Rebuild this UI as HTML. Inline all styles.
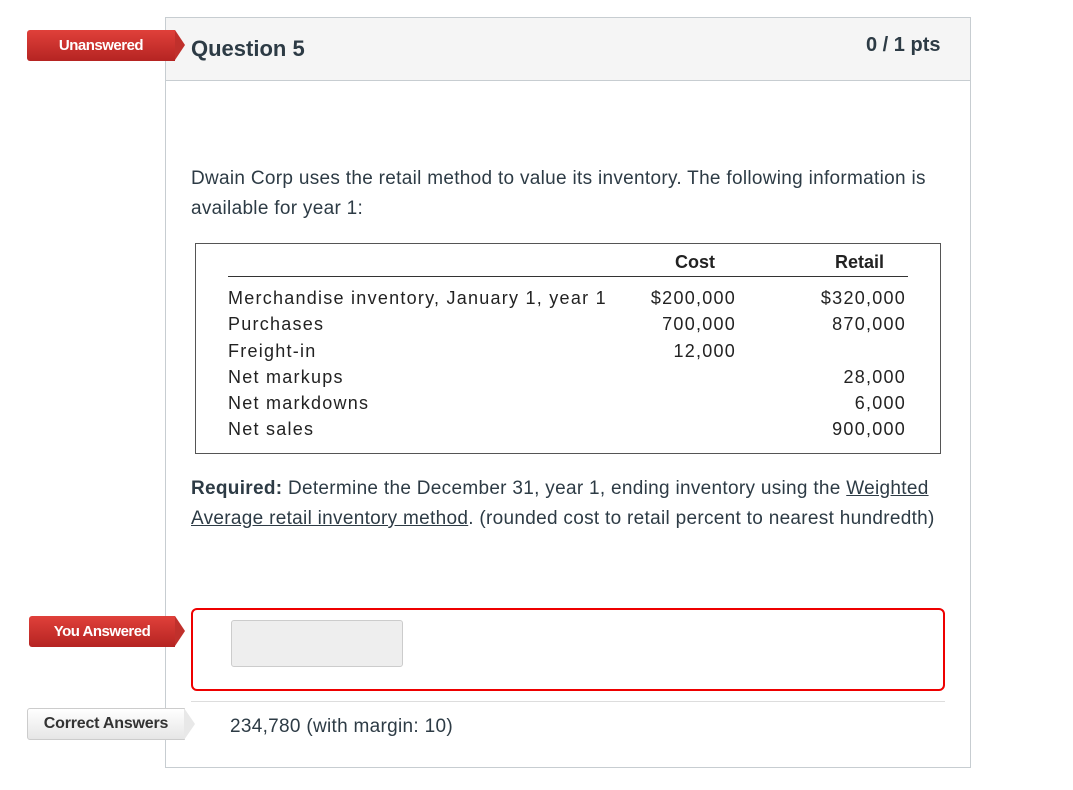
<!DOCTYPE html>
<html><head><style>
body{margin:0;width:1073px;height:790px;background:#fff;font-family:"Liberation Sans",sans-serif;color:#2d3b45;position:relative;overflow:hidden}
.abs{position:absolute}
.tag{position:absolute;height:31px;color:#fff;font-weight:bold;font-size:15px;line-height:31px;letter-spacing:-0.5px;background:linear-gradient(#e0403a,#b52422);border-radius:3px 0 0 3px}
.tag:after{content:"";position:absolute;right:-10px;top:0;border-left:10px solid #c0302c;border-top:15.5px solid transparent;border-bottom:15.5px solid transparent}
.t{font-size:19px;letter-spacing:0.3px;color:#2d3b45;white-space:nowrap}
.tb{font-size:18px;color:#222;position:absolute;white-space:nowrap;letter-spacing:1.25px}
.r{text-align:right}
</style></head><body>
<div class="abs" style="left:165px;top:17px;width:806px;height:751px;border:1px solid #c7cdd1;box-sizing:border-box"></div>
<div class="abs" style="left:166px;top:18px;width:804px;height:62px;background:#f5f5f5;border-bottom:1px solid #c7cdd1"></div>
<div class="tag" style="left:27px;top:30px;width:148px;text-align:center">Unanswered</div>
<div class="abs" style="left:191px;top:36px;font-size:22px;font-weight:bold;color:#2d3b45">Question 5</div>
<div class="abs" style="left:866px;top:34px;font-size:20px;font-weight:bold;color:#2d3b45">0 / 1 pts</div>
<div class="abs t" style="left:191px;top:164px;line-height:30px">Dwain Corp uses the retail method to value its inventory. The following information is<br>available for year 1:</div>
<div class="abs" style="left:195px;top:243px;width:746px;height:211px;border:1.5px solid #555;box-sizing:border-box"></div>
<div class="abs" style="left:228px;top:276px;width:680px;height:1px;background:#333"></div>
<div class="tb" style="left:675px;top:252px;font-weight:bold;letter-spacing:0">Cost</div>
<div class="tb" style="left:835px;top:252px;font-weight:bold;letter-spacing:0">Retail</div>
<div class="tb" style="left:228px;top:285px;line-height:26.3px">Merchandise inventory, January 1, year 1<br>Purchases<br>Freight-in<br>Net markups<br>Net markdowns<br>Net sales</div>
<div class="tb r" style="left:620px;width:116px;top:285px;line-height:26.3px">$200,000<br>700,000<br>12,000</div>
<div class="tb r" style="left:780px;width:126px;top:285px;line-height:26.3px">$320,000<br>870,000<br><br>28,000<br>6,000<br>900,000</div>
<div class="abs t" style="left:191px;top:474px;line-height:30px"><b>Required:</b> Determine the December 31, year 1, ending inventory using the <u>Weighted</u><br><u>Average retail inventory method</u>. (rounded cost to retail percent to nearest hundredth)</div>
<div class="tag" style="left:29px;top:616px;width:146px;text-align:center">You Answered</div>
<div class="abs" style="left:191px;top:608px;width:754px;height:83px;border:2px solid #e00;border-radius:6px;box-sizing:border-box"></div>
<div class="abs" style="left:231px;top:620px;width:172px;height:47px;background:#eee;border:1px solid #ccc;border-radius:3px;box-sizing:border-box"></div>
<div class="abs" style="left:191px;top:701px;width:754px;height:1px;background:#ddd"></div>
<div class="abs" style="left:27px;top:708px;width:158px;height:32px;background:linear-gradient(#fff,#e6e6e6);border:1px solid #ccc;box-sizing:border-box;border-radius:3px 0 0 3px;font-size:16px;font-weight:bold;color:#333;line-height:30px;text-align:center;letter-spacing:-0.2px">Correct Answers</div>
<div class="abs" style="left:184px;top:708px;border-left:11px solid #e8e8e8;border-top:16px solid transparent;border-bottom:16px solid transparent"></div>
<div class="abs t" style="left:230px;top:716px">234,780 (with margin: 10)</div>
</body></html>
